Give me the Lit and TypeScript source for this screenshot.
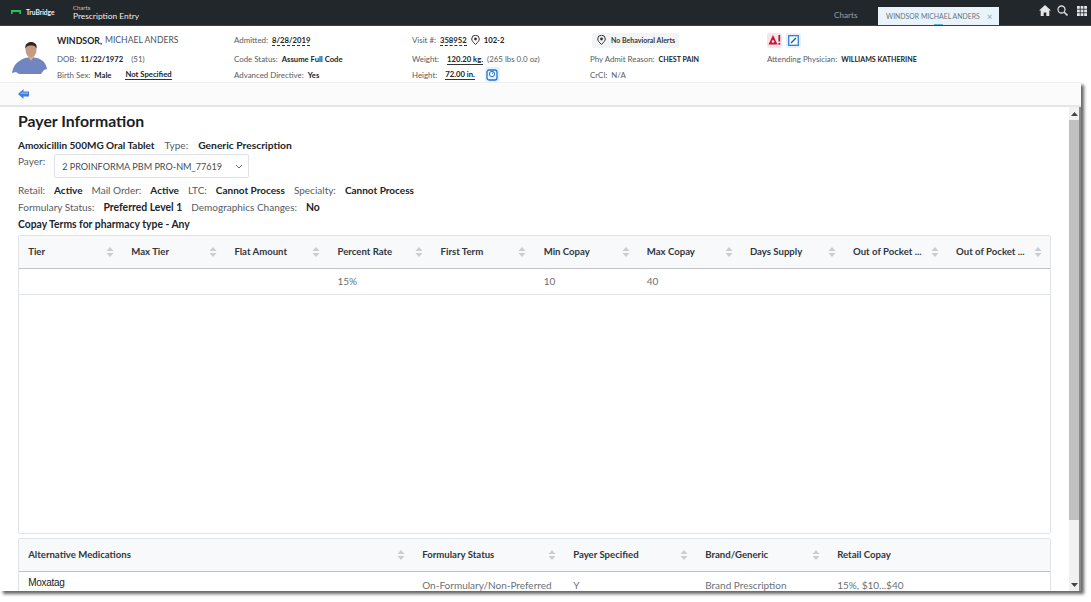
import { LitElement, html, css, svg } from "lit";
import { customElement } from "lit/decorators.js";

const sortIcon = html`<svg class="sort" viewBox="0 0 8 12" width="8" height="12"><path d="M4 1 7.500 5H.5z" fill="#c9ced3"/><path d="M4 11 .5 7h7z" fill="#c9ced3"/></svg>`;

const copayCols = ["Tier","Max Tier","Flat Amount","Percent Rate","First Term","Min Copay","Max Copay","Days Supply","Out of Pocket ...","Out of Pocket ..."];
const copayRow = ["","","","15%","","10","40","","",""];

@customElement("app-root")
export class AppRoot extends LitElement {
  static styles = css`
    :host { display: block; width: 1091px; height: 602px; overflow: hidden; background: #fff; position: relative;
      font-family: Lato, "Noto Sans", sans-serif; font-size: 7.9px; color: #555c63; }
    * { box-sizing: border-box; }
    b { font-weight: 700; color: #20252a; }
    .top { height: 26px; background: #22272b; border-bottom: 1px solid #3c4146; display: flex; align-items: stretch; color: #fff; }
    .logo { width: 73px; display: flex; align-items: center; padding-left: 11px; gap: 5px; font-size: 6.600px; font-weight: 700; color: #eef; padding-bottom: 1px; }
    .crumb { display: flex; flex-direction: column; justify-content: center; line-height: 9px; padding-bottom: 1px; }
    .crumb small { font-size: 6px; color: #c8ccd0; }
    .crumb span { font-size: 8.400px; color: #eceeef; }
    .tabs { margin-left: auto; display: flex; align-items: flex-end; }
    .tab-plain { font-size: 8.200px; color: #9aa0a5; width: 44px; align-self: center; padding-top: 4px; }
    .tab { width: 121px; height: 18px; background: #e9f3fb; color: #6b737b; font-size: 6.900px; display: flex; align-items: center; padding-left: 8px; gap: 7px; position: relative; white-space: nowrap; }
    .tab i { position: absolute; left: 56px; bottom: 0; width: 9px; height: 1.500px; background: #58b4e6; }
    .tab em { font-style: normal; color: #9aa5ae; font-size: 10px; line-height: 10px; }
    .tools { width: 92px; display: flex; align-items: center; justify-content: flex-end; gap: 6px; padding: 0 4px 4px 0; }
    .gap3 { margin-left: 3px; }

    .patient { height: 56px; display: grid; grid-template-columns: 57px 177px 178px 178px 177px 1fr; grid-template-rows: 25px 16px 15px; align-items: center; }
    .photo { grid-row: 1 / 4; align-self: start; padding: 16px 0 0 12px; }
    .cell { white-space: nowrap; display: flex; align-items: center; gap: 4px; }
    .r1 { padding-top: 3px; }
    .name { font-size: 8.600px; color: #4d545b; gap: 3px; }
    .cell b { font-size: 7.700px; }
    .cell b.caps { font-size: 7.100px; }
    .name b { font-size: 8.800px; }
    .dash { border-bottom: 1px dashed #333; color: #20252a; font-weight: 700; line-height: 10px; font-size: 7.700px; }
    .solid { border-bottom: 1px solid #333; color: #20252a; font-weight: 700; line-height: 10px; font-size: 7.700px; }
    .pill { background: #f2f4f6; height: 15px; margin-left: 2px; padding: 0 4px 0 5px; border-radius: 2px; display: inline-flex; align-items: center; gap: 5px; font-size: 7px; color: #333a40; font-weight: 700; }
    .icbtn { width: 15px; height: 15px; display: inline-flex; align-items: center; justify-content: center; border-radius: 2px; }
    .red { background: #fbe4e8; }
    .blue { background: #e6f1fc; }
    .gap6 { margin-left: 6px; }
    .gap10 { margin-left: 10px; }
    .gap4 { margin-left: 4px; }

    .win { position: absolute; left: 0; top: 82px; width: 1081px; height: 509px; background: #fff; box-shadow: 3px 3px 3px rgba(0,0,0,.6); display: flex; flex-direction: column; }
    .toolbar { height: 25px; flex: none; background: #fbfbfb; border-top: 1px solid #f0f0f0; border-bottom: 2px solid #e6e6e6; padding: 6px 0 0 18px; }
    .body { flex: 1; display: flex; min-height: 0; }
    .content { flex: 1; min-width: 0; overflow: hidden; padding: 0 18px; position: relative; font-size: 10px; }
    .sb { width: 12px; flex: none; background: #f1f1f1; display: flex; flex-direction: column; border-right: 2px solid #8a8a8a; }
    .sb .arrow { height: 13px; display: flex; align-items: center; justify-content: center; }
    .sb .thumb { height: 400px; background: #c1c1c1; }
    .sb .sp { flex: 1; }

    h1 { margin: 4px 0 0; font-size: 15.800px; line-height: 20px; font-weight: 700; color: #1b1f23; }
    .line { display: flex; align-items: center; white-space: nowrap; height: 17px; }
    .line b { margin: 0 9px; font-size: 10px; }
    .line b.first { margin-left: 0; margin-right: 10px; font-size: 10px; }
    .line b.copay { margin-left: 0; font-size: 10.350px; }
    .l1 { margin-top: 5px; }
    .l1 b { margin-left: 10px; font-size: 10.300px; }
    .l3 b { font-size: 10.400px; }
    .payer { display: flex; align-items: flex-start; height: 27px; margin-top: 1px; }
    .payer label { margin-right: 9px; line-height: 14px; }
    .select { width: 195px; height: 24px; border: 1px solid #dfe2e5; border-radius: 2px; display: flex; align-items: center; justify-content: space-between; padding: 0 5px 0 7px; color: #454c53; font-size: 9.100px; }
    .t { border: 1px solid #e1e4e7; border-radius: 2px; margin-top: 3px; width: 1033px; background: #fff; }
    .t1 { height: 299px; }
    .t2 { margin-top: 4px; }
    .row { display: grid; }
    .t1 .row { grid-template-columns: repeat(10, 1fr); }
    .t2 .row { grid-template-columns: 394px 151px 132px 132px 1fr; }
    .head { height: 33px; background: #f8f9fb; border-bottom: 1px solid #bfc3c7; }
    .hc { display: flex; align-items: center; justify-content: space-between; padding: 0 8px 1px 9.200px; font-weight: 700; color: #30373e; font-size: 9.600px; white-space: nowrap; overflow: hidden; }
    .data { height: 26px; border-bottom: 1px solid #e1e4e7; color: #6a7178; }
    .data > div { padding: 0 9.200px 1px; display: flex; align-items: center; }
    .t2 .data { height: 40px; }
    .t2 .data > div { align-items: flex-start; padding-top: 7px; }
    .t2 .data > .moxa { font-family: "Liberation Sans", Arial, sans-serif; color: #222; font-size: 10px; letter-spacing: -.3px; padding-top: 5px; }
  `;

  private photo() {
    return html`<svg width="36" height="32" viewBox="0 0 36 32">
      <path d="M0 31C1 24 5 19 13 16L19 15 25 16C31 18 34 21 35 27L32 28 29 32 7 32 4 30Z" fill="#6f86c0"/>
      <path d="M15 13 19 19 23 13 22 11H16Z" fill="#d9a98f"/>
      <ellipse cx="19" cy="8" rx="5.500" ry="7" fill="#c89a80"/>
      <path d="M13.500 7C12.500 2 16 0 19 0 22.500 0 25.500 2 24.500 7 23.500 3.500 21 3.500 19 3.500 17 3.500 14.500 3.500 13.500 7Z" fill="#2f2a28"/>
    </svg>`;
  }

  private pin() {
    return html`<svg width="9" height="10" viewBox="0 0 9 10"><path d="M4.500 9.500C2 7 .7 5.500.7 4A3.800 3.800 0 0 1 8.300 4C8.300 5.500 7 7 4.500 9.500Z" fill="none" stroke="#333" stroke-width="1"/><circle cx="4.500" cy="4" r="1.400" fill="#333"/></svg>`;
  }

  render() {
    return html`
      <div class="top">
        <div class="logo">
          <svg width="10" height="4" viewBox="0 0 10 4"><path d="M0 0H10V4H8.300V2H1.700V4H0Z" fill="#22c55e"/></svg>
          <span>TruBridge</span>
        </div>
        <div class="crumb"><small>Charts</small><span>Prescription Entry</span></div>
        <div class="tabs">
          <div class="tab-plain">Charts</div>
          <div class="tab">WINDSOR MICHAEL ANDERS <em>×</em><i></i></div>
        </div>
        <div class="tools">
          <svg width="12" height="11" viewBox="0 0 12 11"><path d="M6 0 12 5.500H10.300V11H7.300V7.500H4.700V11H1.700V5.500H0Z" fill="#e4e6e8"/></svg>
          <svg width="11" height="11" viewBox="0 0 11 11"><circle cx="4.500" cy="4.500" r="3.500" fill="none" stroke="#d8dadc" stroke-width="1.300"/><path d="M7 7 10.500 10.500" stroke="#d8dadc" stroke-width="1.600"/></svg>
          <svg class="gap3" width="10" height="10" viewBox="0 0 10 10" fill="#e4e6e8">
            ${[0, 3.6, 7.2].flatMap((x) => [0, 3.6, 7.2].map((y) => svg`<rect x=${x} y=${y} width="2.800" height="2.800"/>`))}
          </svg>
        </div>
      </div>

      <div class="patient">
        <div class="photo">${this.photo()}</div>
        <div class="cell name r1"><b>WINDSOR,</b> MICHAEL ANDERS</div>
        <div class="cell r1">Admitted: <span class="dash">8/28/2019</span></div>
        <div class="cell r1">Visit #: <span class="dash">358952</span>
          ${this.pin()}
          <b>102-2</b></div>
        <div class="cell r1"><span class="pill">${this.pin()} No Behavioral Alerts</span></div>
        <div class="cell r1">
          <span class="icbtn red"><svg width="14" height="12" viewBox="0 0 14 12"><path d="M5 1 9.500 10.500H.5Z" fill="#c4163a"/><circle cx="5" cy="7.500" r="1.300" fill="#fbe4e8"/><path d="M11.300 1V7.500" stroke="#c4163a" stroke-width="1.800"/><circle cx="11.300" cy="9.800" r="1.100" fill="#c4163a"/></svg></span>
          <span class="icbtn blue"><svg width="11" height="11" viewBox="0 0 11 11"><rect x=".7" y=".7" width="9.600" height="9.600" fill="#fff" stroke="#2f7fd6" stroke-width="1.300"/><path d="M3 8 8 3" stroke="#1c5fae" stroke-width="1.400"/></svg></span>
        </div>

        <div class="cell">DOB: <b>11/22/1972</b> <span class="gap4">(51)</span></div>
        <div class="cell">Code Status: <b>Assume Full Code</b></div>
        <div class="cell">Weight: <span class="solid gap4">120.20 kg.</span> <span>(265 lbs 0.0 oz)</span></div>
        <div class="cell">Phy Admit Reason: <b class="caps">CHEST PAIN</b></div>
        <div class="cell">Attending Physician: <b class="caps">WILLIAMS KATHERINE</b></div>

        <div class="cell">Birth Sex: <b>Male</b> <span class="solid gap10">Not Specified</span></div>
        <div class="cell">Advanced Directive: <b>Yes</b></div>
        <div class="cell">Height: <span class="solid gap4">72.00 in.</span>
          <span class="icbtn blue gap6"><svg width="12" height="12" viewBox="0 0 12 12"><rect x="1" y="1" width="10" height="10" rx="2" fill="#e6f1fc" stroke="#1f74cf" stroke-width="1.300"/><circle cx="6" cy="5" r="2.600" fill="#fff" stroke="#1f74cf"/><path d="M6 5 7 3.500" stroke="#1f74cf"/></svg></span></div>
        <div class="cell">CrCl: <span>N/A</span></div>
      </div>

      <div class="win">
        <div class="toolbar">
          <svg width="11" height="10" viewBox="0 0 11 10"><path d="M0 5 5.500 0V2.500H11V7.500H5.500V10Z" fill="#3f7fe0"/><path d="M2 5 5 2.500V3.500H10V5Z" fill="#7fb0f2"/></svg>
        </div>
        <div class="body">
          <div class="content">
            <h1>Payer Information</h1>
            <div class="line l1"><b class="first">Amoxicillin 500MG Oral Tablet</b>Type:<b>Generic Prescription</b></div>
            <div class="payer"><label>Payer:</label>
              <div class="select"><span>2 PROINFORMA PBM PRO-NM_77619</span>
                <svg width="8" height="5" viewBox="0 0 8 5"><path d="M1 1 4 4 7 1" fill="none" stroke="#667" stroke-width="1"/></svg></div></div>
            <div class="line">Retail:<b>Active</b>Mail Order:<b>Active</b>LTC:<b>Cannot Process</b>Specialty:<b>Cannot Process</b></div>
            <div class="line l3">Formulary Status:<b>Preferred Level 1</b>Demographics Changes:<b>No</b></div>
            <div class="line"><b class="copay">Copay Terms for pharmacy type - Any</b></div>
            <div class="t t1">
              <div class="row head">${copayCols.map((c) => html`<div class="hc"><span>${c}</span>${sortIcon}</div>`)}</div>
              <div class="row data">${copayRow.map((c) => html`<div>${c}</div>`)}</div>
            </div>
            <div class="t t2">
              <div class="row head">
                <div class="hc"><span>Alternative Medications</span>${sortIcon}</div>
                <div class="hc"><span>Formulary Status</span>${sortIcon}</div>
                <div class="hc"><span>Payer Specified</span>${sortIcon}</div>
                <div class="hc"><span>Brand/Generic</span>${sortIcon}</div>
                <div class="hc"><span>Retail Copay</span></div>
              </div>
              <div class="row data">
                <div class="moxa">Moxatag</div>
                <div>On-Formulary/Non-Preferred</div>
                <div>Y</div>
                <div>Brand Prescription</div>
                <div>15%, $10...$40</div>
              </div>
            </div>
          </div>
          <div class="sb">
            <div class="arrow"><svg width="7" height="4" viewBox="0 0 7 4"><path d="M3.500 0 7 4H0Z" fill="#444"/></svg></div>
            <div class="thumb"></div>
            <div class="sp"></div>
            <div class="arrow"><svg width="7" height="4" viewBox="0 0 7 4"><path d="M3.500 4 7 0H0Z" fill="#444"/></svg></div>
          </div>
        </div>
      </div>
    `;
  }
}
